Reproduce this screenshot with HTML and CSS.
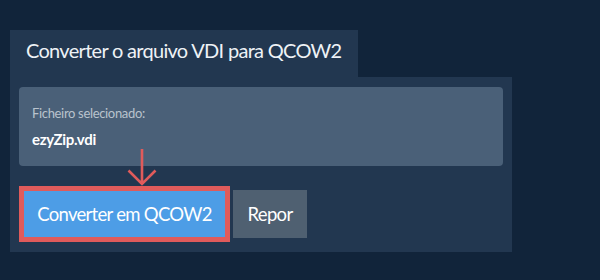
FILE: index.html
```html
<!DOCTYPE html>
<html lang="pt">
<head>
    <meta charset="UTF-8">
    <title>Converter VDI para QCOW2</title>
    <link rel="stylesheet" href="styles.css">
</head>
<body>
    <div class="converter">
        <div class="tab">Converter o arquivo VDI para QCOW2</div>
        <div class="panel">
            <div class="file-box">
                <div class="file-label">Ficheiro selecionado:</div>
                <div class="file-name">ezyZip.vdi</div>
            </div>
            <div class="actions">
                <div class="convert-wrap">
                    <svg class="arrow" width="30" height="38" viewBox="0 0 30 38">
                        <path d="M15 1 V36 M1.5 22.5 L15 36 L28.5 22.5" fill="none" stroke="#e05b5b" stroke-width="2.6"/>
                    </svg>
                    <button class="btn btn-convert">Converter em QCOW2</button>
                </div>
                <button class="btn btn-reset">Repor</button>
            </div>
        </div>
    </div>
</body>
</html>
```

FILE: styles.css
```css
body {
    margin: 0;
    padding: 30px 10px 0 10px;
    background-color: #11243a;
    font-family: Lato, "Open Sans", sans-serif;
}
.converter {
    width: 502px;
}
.tab {
    display: inline-block;
    box-sizing: border-box;
    background: #223750;
    color: #eef2f6;
    font-size: 20px;
    letter-spacing: -0.7px;
    white-space: nowrap;
    padding: 8px 16px 0 16px;
    height: 47px;
    width: 348px;
    vertical-align: top;
}
.panel {
    background: #223750;
    padding: 10px 9px 10px 9px;
}
.file-box {
    background: #4a6078;
    border-radius: 4px;
    padding: 18px 13px 18px 13px;
}
.file-label {
    color: #b9c3cd;
    font-size: 13px;
    letter-spacing: -0.33px;
    margin-bottom: 9px;
}
.file-name {
    color: #ffffff;
    font-size: 15px;
    letter-spacing: -0.3px;
    font-weight: bold;
}
.actions {
    display: flex;
    align-items: center;
    gap: 3px;
    margin-top: 20px;
}
.convert-wrap {
    position: relative;
}
.arrow {
    position: absolute;
    left: 108px;
    top: -38px;
}
.btn {
    font-family: Lato, "Open Sans", sans-serif;
    font-size: 18.5px;
    letter-spacing: -0.7px;
    color: #ffffff;
    border: none;
    padding: 0;
    cursor: pointer;
}
.btn-convert {
    display: block;
    background: #4d9de6;
    border: 5px solid #e05b5b;
    width: 211px;
    height: 56px;
}
.btn-reset {
    background: #4f6071;
    width: 74px;
    height: 48px;
}
```
